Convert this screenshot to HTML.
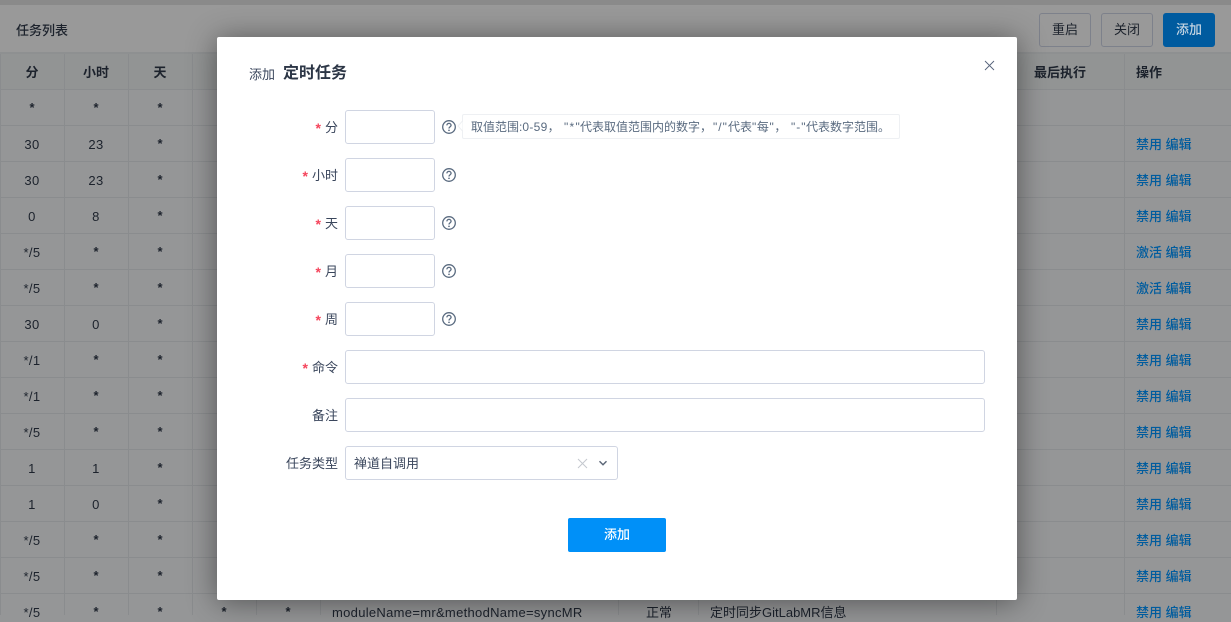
<!DOCTYPE html>
<html><head><meta charset="utf-8">
<style>
*{box-sizing:border-box;margin:0;padding:0}
html,body{width:1231px;height:615px;overflow:hidden;background:#959697;font-family:"Liberation Sans","Noto Sans CJK SC",sans-serif;font-size:13px;color:#1c222c}
.abs{position:absolute;white-space:nowrap}
#page{position:absolute;left:0;top:0;width:1231px;height:615px;background:#959697}
#top{position:absolute;left:0;top:0;width:1231px;height:5px;background:#8a8a8a}
#bar{position:absolute;left:0;top:5px;width:1231px;height:49px;background:#999;border-bottom:2px solid #8e9091}
.tb{position:absolute;top:13px;width:52px;height:34px;border:1px solid #7d818b;border-radius:3px;background:#999;text-align:center;line-height:32px;color:#1c222c}
#thead{position:absolute;left:0;top:54px;width:1231px;height:36px;background:#929494}
.vl{position:absolute;top:54px;bottom:0;width:1px;background:#8a8c8e}
.hl{position:absolute;left:0;width:1231px;height:1px;background:#8a8c8e}
.c{position:absolute;text-align:center;width:64px;line-height:18px;white-space:nowrap;margin-top:1px;letter-spacing:.4px}
.s{font-weight:700;letter-spacing:0}
.th{font-weight:700;color:#1c222c;letter-spacing:0}
.op{position:absolute;left:1136px;color:#005c9e;font-weight:500;line-height:18px;white-space:nowrap;margin-top:1px}
#modal{position:absolute;left:217px;top:37px;width:800px;height:563px;background:#fff;border-radius:2px;box-shadow:0 2px 30px rgba(0,0,0,.45)}
.lab{position:absolute;left:230px;width:108px;text-align:right;line-height:18px;color:#3a465c;white-space:nowrap}
.lab i{position:relative;top:1px;line-height:0;font-style:normal;font-weight:700;font-size:14px;color:#f5455c;margin-right:4px;font-family:"Liberation Sans",sans-serif}
.inp{position:absolute;left:345px;height:34px;background:#fff;border:1px solid #d0d5e2;border-radius:3px}
.q{position:absolute;left:440.5px;width:16px;height:16px}
.t{position:absolute;top:118px;font-size:12px;line-height:18px;color:#5a6b80;white-space:nowrap}
</style></head>
<body>
<div id="page">
<div id="top"></div>
<div id="bar"></div>
<div class="abs" style="left:16px;top:22px;font-weight:500;line-height:18px">任务列表</div>
<div class="tb" style="left:1039px">重启</div>
<div class="tb" style="left:1101px">关闭</div>
<div class="tb" style="left:1163px;background:#005b9f;border-color:#005b9f;color:#c4d4e2;font-weight:500">添加</div>
<div id="thead"></div>
<div class="vl" style="left:0"></div><div class="vl" style="left:64px"></div><div class="vl" style="left:128px"></div><div class="vl" style="left:192px"></div><div class="vl" style="left:256px"></div><div class="vl" style="left:320px"></div><div class="vl" style="left:618px"></div><div class="vl" style="left:698px"></div><div class="vl" style="left:996px"></div><div class="vl" style="left:1124px"></div>
<div class="hl" style="top:89px"></div><div class="hl" style="top:125px"></div><div class="hl" style="top:161px"></div><div class="hl" style="top:197px"></div><div class="hl" style="top:233px"></div><div class="hl" style="top:269px"></div><div class="hl" style="top:305px"></div><div class="hl" style="top:341px"></div><div class="hl" style="top:377px"></div><div class="hl" style="top:413px"></div><div class="hl" style="top:449px"></div><div class="hl" style="top:485px"></div><div class="hl" style="top:521px"></div><div class="hl" style="top:557px"></div><div class="hl" style="top:593px"></div>
<div class="c th" style="left:0;top:63px">分</div><div class="c th" style="left:64px;top:63px">小时</div><div class="c th" style="left:128px;top:63px">天</div>
<div class="abs th" style="left:1034px;top:64px;line-height:18px">最后执行</div><div class="abs th" style="left:1136px;top:64px;line-height:18px">操作</div>

<div class="c s" style="left:0;top:98px">*</div><div class="c s" style="left:64px;top:98px">*</div><div class="c s" style="left:128px;top:98px">*</div>
<div class="c" style="left:0;top:135px">30</div><div class="c" style="left:64px;top:135px">23</div><div class="c s" style="left:128px;top:134px">*</div><div class="op" style="top:135px">禁用 编辑</div>
<div class="c" style="left:0;top:171px">30</div><div class="c" style="left:64px;top:171px">23</div><div class="c s" style="left:128px;top:170px">*</div><div class="op" style="top:171px">禁用 编辑</div>
<div class="c" style="left:0;top:207px">0</div><div class="c" style="left:64px;top:207px">8</div><div class="c s" style="left:128px;top:206px">*</div><div class="op" style="top:207px">禁用 编辑</div>
<div class="c" style="left:0;top:243px">*/5</div><div class="c s" style="left:64px;top:242px">*</div><div class="c s" style="left:128px;top:242px">*</div><div class="op" style="top:243px">激活 编辑</div>
<div class="c" style="left:0;top:279px">*/5</div><div class="c s" style="left:64px;top:278px">*</div><div class="c s" style="left:128px;top:278px">*</div><div class="op" style="top:279px">激活 编辑</div>
<div class="c" style="left:0;top:315px">30</div><div class="c" style="left:64px;top:315px">0</div><div class="c s" style="left:128px;top:314px">*</div><div class="op" style="top:315px">禁用 编辑</div>
<div class="c" style="left:0;top:351px">*/1</div><div class="c s" style="left:64px;top:350px">*</div><div class="c s" style="left:128px;top:350px">*</div><div class="op" style="top:351px">禁用 编辑</div>
<div class="c" style="left:0;top:387px">*/1</div><div class="c s" style="left:64px;top:386px">*</div><div class="c s" style="left:128px;top:386px">*</div><div class="op" style="top:387px">禁用 编辑</div>
<div class="c" style="left:0;top:423px">*/5</div><div class="c s" style="left:64px;top:422px">*</div><div class="c s" style="left:128px;top:422px">*</div><div class="op" style="top:423px">禁用 编辑</div>
<div class="c" style="left:0;top:459px">1</div><div class="c" style="left:64px;top:459px">1</div><div class="c s" style="left:128px;top:458px">*</div><div class="op" style="top:459px">禁用 编辑</div>
<div class="c" style="left:0;top:495px">1</div><div class="c" style="left:64px;top:495px">0</div><div class="c s" style="left:128px;top:494px">*</div><div class="op" style="top:495px">禁用 编辑</div>
<div class="c" style="left:0;top:531px">*/5</div><div class="c s" style="left:64px;top:530px">*</div><div class="c s" style="left:128px;top:530px">*</div><div class="op" style="top:531px">禁用 编辑</div>
<div class="c" style="left:0;top:567px">*/5</div><div class="c s" style="left:64px;top:566px">*</div><div class="c s" style="left:128px;top:566px">*</div><div class="op" style="top:567px">禁用 编辑</div>
<div class="c" style="left:0;top:603px">*/5</div><div class="c s" style="left:64px;top:602px">*</div><div class="c s" style="left:128px;top:602px">*</div><div class="c s" style="left:192px;top:602px">*</div><div class="c s" style="left:256px;top:602px">*</div>
<div class="abs" style="left:332px;top:604px;line-height:18px;letter-spacing:.3px">moduleName=mr&amp;methodName=syncMR</div>
<div class="abs" style="left:646px;top:604px;line-height:18px">正常</div>
<div class="abs" style="left:710px;top:604px;line-height:18px">定时同步GitLabMR信息</div>
<div class="op" style="top:603px">禁用 编辑</div>
</div>
<div id="modal"></div>

<div class="abs" style="left:249px;top:66px;line-height:18px;color:#3a465c">添加</div>
<div class="abs" style="left:283px;top:63px;font-size:16px;line-height:22px;font-weight:700;color:#2c3646">定时任务</div>
<svg class="abs" style="left:984px;top:60px" width="11" height="11" viewBox="0 0 11 11"><path d="M1 1L10 10M10 1L1 10" stroke="#56627a" stroke-width=".9" fill="none"/></svg>

<div class="lab" style="top:119px"><i>*</i>分</div>
<div class="lab" style="top:167px"><i>*</i>小时</div>
<div class="lab" style="top:215px"><i>*</i>天</div>
<div class="lab" style="top:263px"><i>*</i>月</div>
<div class="lab" style="top:311px"><i>*</i>周</div>
<div class="lab" style="top:359px"><i>*</i>命令</div>
<div class="lab" style="top:407px">备注</div>
<div class="lab" style="top:455px">任务类型</div>

<div class="inp" style="top:110px;width:90px"></div>
<div class="inp" style="top:158px;width:90px"></div>
<div class="inp" style="top:206px;width:90px"></div>
<div class="inp" style="top:254px;width:90px"></div>
<div class="inp" style="top:302px;width:90px"></div>
<div class="inp" style="top:350px;width:640px"></div>
<div class="inp" style="top:398px;width:640px"></div>
<div class="inp" style="top:446px;width:273px"></div>

<svg class="q" style="top:119px" viewBox="0 0 16 16"><circle cx="8" cy="8" r="6.3" fill="none" stroke="#5a6b80" stroke-width="1.3"/><path d="M5.9 6.4C5.9 5.1 6.9 4.4 8 4.4S10.1 5.2 10.1 6.3C10.1 7.7 8 7.8 8 9.5" fill="none" stroke="#5a6b80" stroke-width="1.3"/><circle cx="8" cy="11.3" r=".85" fill="#5a6b80"/></svg>
<svg class="q" style="top:167px" viewBox="0 0 16 16"><circle cx="8" cy="8" r="6.3" fill="none" stroke="#5a6b80" stroke-width="1.3"/><path d="M5.9 6.4C5.9 5.1 6.9 4.4 8 4.4S10.1 5.2 10.1 6.3C10.1 7.7 8 7.8 8 9.5" fill="none" stroke="#5a6b80" stroke-width="1.3"/><circle cx="8" cy="11.3" r=".85" fill="#5a6b80"/></svg>
<svg class="q" style="top:215px" viewBox="0 0 16 16"><circle cx="8" cy="8" r="6.3" fill="none" stroke="#5a6b80" stroke-width="1.3"/><path d="M5.9 6.4C5.9 5.1 6.9 4.4 8 4.4S10.1 5.2 10.1 6.3C10.1 7.7 8 7.8 8 9.5" fill="none" stroke="#5a6b80" stroke-width="1.3"/><circle cx="8" cy="11.3" r=".85" fill="#5a6b80"/></svg>
<svg class="q" style="top:263px" viewBox="0 0 16 16"><circle cx="8" cy="8" r="6.3" fill="none" stroke="#5a6b80" stroke-width="1.3"/><path d="M5.9 6.4C5.9 5.1 6.9 4.4 8 4.4S10.1 5.2 10.1 6.3C10.1 7.7 8 7.8 8 9.5" fill="none" stroke="#5a6b80" stroke-width="1.3"/><circle cx="8" cy="11.3" r=".85" fill="#5a6b80"/></svg>
<svg class="q" style="top:311px" viewBox="0 0 16 16"><circle cx="8" cy="8" r="6.3" fill="none" stroke="#5a6b80" stroke-width="1.3"/><path d="M5.9 6.4C5.9 5.1 6.9 4.4 8 4.4S10.1 5.2 10.1 6.3C10.1 7.7 8 7.8 8 9.5" fill="none" stroke="#5a6b80" stroke-width="1.3"/><circle cx="8" cy="11.3" r=".85" fill="#5a6b80"/></svg>

<div class="abs" style="left:462px;top:114px;width:438px;height:25px;border:1px solid #eef0f3;border-radius:2px"></div>
<svg class="abs" style="left:457px;top:120px" width="6" height="12" viewBox="0 0 6 12"><path d="M5.5 1L1 6L5.5 11" fill="#fff" stroke="#eef0f3"/></svg>
<div class="t" style="left:471px">取值范围:<span style="letter-spacing:.3px">0-59</span>，</div>
<div class="t" style="left:564px;letter-spacing:1.3px">"*"</div>
<div class="t" style="left:580px">代表取值范围内的数字，</div>
<div class="t" style="left:713px;letter-spacing:1px">"/"</div>
<div class="t" style="left:728px">代表</div>
<div class="t" style="left:752px;letter-spacing:.6px">"每"，</div>
<div class="t" style="left:791px;letter-spacing:1px">"-"</div>
<div class="t" style="left:806px">代表数字范围。</div>

<div class="abs" style="left:354px;top:455px;line-height:18px;color:#3a465c">禅道自调用</div>
<svg class="abs" style="left:577px;top:458px" width="11" height="11" viewBox="0 0 11 11"><path d="M1 1L10 10M10 1L1 10" stroke="#c4c8ce" stroke-width="1" fill="none"/></svg>
<svg class="abs" style="left:598px;top:460px" width="10" height="7" viewBox="0 0 10 7"><path d="M1.5 1.2L5 4.8L8.5 1.2" stroke="#5a6576" stroke-width="1.4" fill="none"/></svg>

<div class="abs" style="left:568px;top:518px;width:98px;height:34px;background:#0090f8;border-radius:2px;text-align:center;line-height:34px;color:#fff;font-weight:500">添加</div>
</body></html>
